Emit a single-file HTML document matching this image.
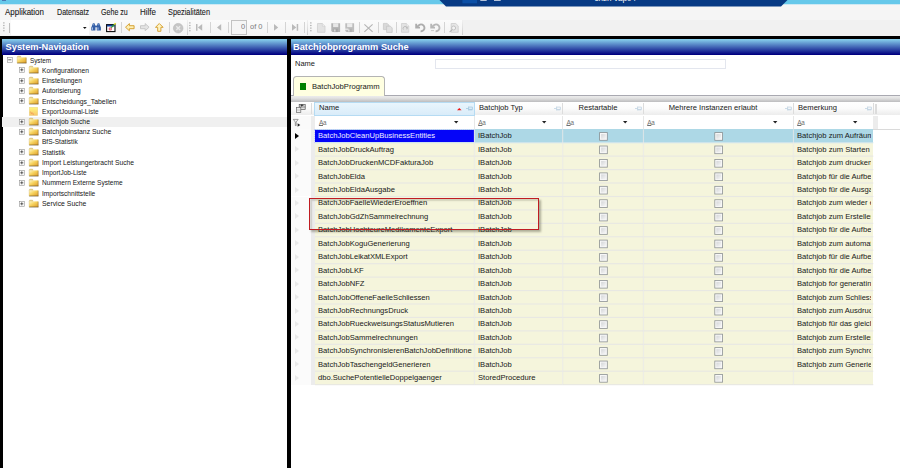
<!DOCTYPE html><html><head><meta charset="utf-8"><title>Batchjobprogramm Suche</title><style>
*{box-sizing:border-box;margin:0;padding:0}
html,body{width:900px;height:468px;overflow:hidden;background:#fff}
body{position:relative;font-family:"Liberation Sans",sans-serif;color:#1c1c1c}
.a{position:absolute}
.t{position:absolute;white-space:nowrap;line-height:1}
.menu{font-size:8.8px;top:8.3px;color:#1a1a1a;transform-origin:0 50%;-webkit-text-stroke:.1px currentColor}
.hd{font-weight:bold;color:#fff;font-size:9.25px;top:42.5px}
.g{font-size:8px;transform:scaleX(.95);transform-origin:0 50%;color:#181818}
.tr{font-size:7.8px;color:#161616;transform-origin:0 50%}
.cell{position:absolute;overflow:hidden;white-space:nowrap;font-size:8px;line-height:13.44px;height:13.44px;color:#181818}
.s{display:inline-block;transform:scaleX(.95);transform-origin:0 50%}
.cb{position:absolute;width:8.6px;height:8.6px;border:.9px solid #8e8f8f;background:linear-gradient(135deg,#dcdcdc,#fafafa 70%);box-shadow:inset 0 0 0 1.2px #f4f4f4}
.sep{position:absolute;width:1px;background:#d4d4d4;top:22px;height:11px}
svg{position:absolute;overflow:visible}
</style></head><body>
<div class="a" style="left:0;top:0;width:900px;height:19.8px;background:#f5f5f5"></div>
<div class="a" style="left:0;top:0;width:900px;height:4.5px;background:#66c8ea"></div>
<div class="a" style="left:0;top:4.2px;width:900px;height:1px;background:linear-gradient(#a8dcf0,#f5f5f5)"></div>
<svg style="left:0;top:0" width="900" height="8"><polygon points="439.5,0 787.5,0 781,6.4 446,6.4" fill="#073a84"/><rect x="462.4" y="0" width="14.6" height="3.3" fill="#0b4fa6"/><rect x="480.3" y="0" width="6.4" height=".7" fill="#fff"/><rect x="494" y="0" width="6.7" height=".7" fill="#fff"/></svg>
<div class="t" style="left:594.5px;top:-5.5px;font-size:8px;color:#fff">chzh-vap04</div>
<div class="a" style="left:1.8px;top:0;width:4.6px;height:.9px;background:#4468a8;opacity:.8"></div>
<div class="t menu" style="left:5.3px;transform:scaleX(0.904)">Applikation</div>
<div class="t menu" style="left:56.6px;transform:scaleX(0.81)">Datensatz</div>
<div class="t menu" style="left:101.1px;transform:scaleX(0.806)">Gehe zu</div>
<div class="t menu" style="left:140px;transform:scaleX(0.909)">Hilfe</div>
<div class="t menu" style="left:168.3px;transform:scaleX(0.834)">Spezialitäten</div>
<div class="a" style="left:0;top:19.8px;width:900px;height:16px;background:#f1f1f1"></div>
<div class="a" style="left:0;top:19.8px;width:462.7px;height:15.8px;background:linear-gradient(#fbfbfb,#f3f3f3)"></div>
<div class="a" style="left:10.5px;top:20px;width:78.5px;height:15.4px;background:#fff"></div>
<div class="a" style="left:9.2px;top:22.6px;width:.8px;height:10px;background:#bdbdbd"></div>
<svg style="left:3.4px;top:22.2px" width="2" height="10" viewBox="0 0 2 10"><g fill="#a9a9a9"><rect x=".2" y=".3" width="1.3" height="1.2"/><rect x=".2" y="2.9" width="1.3" height="1.2"/><rect x=".2" y="5.5" width="1.3" height="1.2"/><rect x=".2" y="8.1" width="1.3" height="1.2"/></g></svg>
<svg style="left:189.4px;top:22.2px" width="2" height="10" viewBox="0 0 2 10"><g fill="#a9a9a9"><rect x=".2" y=".3" width="1.3" height="1.2"/><rect x=".2" y="2.9" width="1.3" height="1.2"/><rect x=".2" y="5.5" width="1.3" height="1.2"/><rect x=".2" y="8.1" width="1.3" height="1.2"/></g></svg>
<svg style="left:309.6px;top:22.2px" width="2" height="10" viewBox="0 0 2 10"><g fill="#a9a9a9"><rect x=".2" y=".3" width="1.3" height="1.2"/><rect x=".2" y="2.9" width="1.3" height="1.2"/><rect x=".2" y="5.5" width="1.3" height="1.2"/><rect x=".2" y="8.1" width="1.3" height="1.2"/></g></svg>
<div class="a" style="left:186.8px;top:20px;width:.9px;height:15.4px;background:linear-gradient(#f1f1f1,#cfcfcf)"></div>
<div class="a" style="left:306.8px;top:20px;width:.9px;height:15.4px;background:linear-gradient(#f1f1f1,#cfcfcf)"></div>
<div class="a" style="left:462.2px;top:20px;width:.9px;height:15.4px;background:linear-gradient(#f1f1f1,#cfcfcf)"></div>
<svg style="left:82.9px;top:26.7px" width="3.6" height="2" viewBox="0 0 4.4 2.4"><path d="M0 0H4.4L2.2 2.4Z" fill="#111"/></svg>
<svg style="left:91.2px;top:23.2px" width="10.2" height="8" viewBox="0 0 10.2 8"><g fill="#355fa6"><path d="M1.9 .3H3.5L4.4 3V7.5H.3V4.4Z"/><path d="M6.7 .3H8.3L9.9 4.4V7.5H5.8V3Z"/><rect x="4" y="2.6" width="2.2" height="1.7"/></g><path d="M1.5 4.4V6.8M7 4.4V6.8" stroke="#b4cbee" stroke-width=".9"/><path d="M2.5 .9V2.4M7.7 .9V2.4" stroke="#8fadd9" stroke-width=".7"/></svg>
<svg style="left:105.8px;top:22.6px" width="10.6" height="9.2" viewBox="0 0 10.6 9.2"><rect x=".6" y="1.6" width="8.4" height="7" fill="#fff" stroke="#0b0b0b" stroke-width="1.1"/><rect x="1" y="1.8" width="7.6" height="1.7" fill="#143f9e"/><circle cx="4.3" cy="5.9" r="1.7" fill="#e35a6a"/><circle cx="4.3" cy="5.9" r=".7" fill="#f7c9cf"/><path d="M5.2 4.6L8.6 1.2" stroke="#2f9a2f" stroke-width="1.3"/><path d="M8.2 1.6L9.8 .2" stroke="#e6d520" stroke-width="1.3"/></svg>
<div class="sep" style="left:120.5px"></div>
<div class="sep" style="left:168.5px"></div>
<div class="sep" style="left:209.9px"></div>
<div class="sep" style="left:227.8px"></div>
<div class="sep" style="left:266.8px"></div>
<div class="sep" style="left:285.1px"></div>
<div class="sep" style="left:303.5px"></div>
<div class="sep" style="left:358.8px"></div>
<div class="sep" style="left:377.8px"></div>
<div class="sep" style="left:396.0px"></div>
<div class="sep" style="left:444.2px"></div>
<svg style="left:125.2px;top:23.4px" width="9.6" height="8.4" viewBox="0 0 9.6 8.4"><path d="M.5 4.2L4.4 .6V2.7H9.1V5.7H4.4V7.8Z" fill="#fdefb4" stroke="#d39a26" stroke-width=".9" stroke-linejoin="round"/></svg>
<svg style="left:139.8px;top:23.4px" width="9.6" height="8.4" viewBox="0 0 9.6 8.4"><path d="M9.1 4.2L5.2 .6V2.7H.5V5.7H5.2V7.8Z" fill="#e4e4e4" stroke="#c4c4c4" stroke-width=".9" stroke-linejoin="round"/></svg>
<svg style="left:154.9px;top:23.1px" width="8.6" height="8.8" viewBox="0 0 8.6 8.8"><path d="M4.3 .5L8.1 4.3H5.9V8.3H2.7V4.3H.5Z" fill="#fef4c4" stroke="#d39a26" stroke-width=".9" stroke-linejoin="round"/></svg>
<svg style="left:172.6px;top:22.6px" width="10.4" height="10.4" viewBox="0 0 10.4 10.4"><circle cx="5.2" cy="5.2" r="4.8" fill="#c6c6c6" stroke="#b8b8b8" stroke-width=".6"/><path d="M3.3 3.3L7.1 7.1M7.1 3.3L3.3 7.1" stroke="#e9e9e9" stroke-width="1.4"/></svg>
<svg style="left:196px;top:24px" width="6.2" height="6.8" viewBox="0 0 6.2 6.8"><rect x="0" y="0" width="1.5" height="6.8" fill="#bababa"/><path d="M6.2 0V6.8L1.9 3.4Z" fill="#bababa"/></svg>
<svg style="left:216.6px;top:24px" width="4.2" height="6.8" viewBox="0 0 4.2 6.8"><path d="M4.2 0V6.8L0 3.4Z" fill="#bababa"/></svg>
<svg style="left:274px;top:24px" width="4.2" height="6.8" viewBox="0 0 4.2 6.8"><path d="M0 0V6.8L4.2 3.4Z" fill="#bababa"/></svg>
<svg style="left:292px;top:24px" width="6.2" height="6.8" viewBox="0 0 6.2 6.8"><rect x="4.7" y="0" width="1.5" height="6.8" fill="#bababa"/><path d="M0 0V6.8L4.3 3.4Z" fill="#bababa"/></svg>
<div class="a" style="left:231.2px;top:20px;width:15.6px;height:14.8px;background:#f5f5f5;border:1px solid #c2c2c2"></div>
<div class="t" style="left:240.9px;top:23.3px;font-size:8.1px;color:#7a7a7a;transform:scaleX(.92);transform-origin:0 50%">0</div>
<div class="t" style="left:249.8px;top:23.3px;font-size:8.1px;color:#7a7a7a;transform:scaleX(.92);transform-origin:0 50%">of 0</div>
<svg style="left:316.6px;top:22.6px" width="8.6" height="9.8" viewBox="0 0 8.6 9.8"><path d="M.5 .5H5.4L8 3.1V9.3H.5Z" fill="#e3e3e3" stroke="#cfcfcf" stroke-width=".8"/><path d="M5.4 .5V3.1H8" fill="#f3f3f3" stroke="#cfcfcf" stroke-width=".6"/></svg>
<svg style="left:330.6px;top:22.8px" width="9.4" height="9.4" viewBox="0 0 9.4 9.4"><path d="M.3 .3H9.1V9.1H1.4L.3 8Z" fill="#b4b4b4"/><rect x="2.1" y=".3" width="5.2" height="3.8" fill="#e8e8e8"/><rect x="2.6" y="5.8" width="4.2" height="3.3" fill="#a6a6a6"/><rect x="3.2" y="6.4" width="1.3" height="2.2" fill="#e4e4e4"/></svg>
<svg style="left:345.2px;top:22.8px" width="9.4" height="9.4" viewBox="0 0 9.4 9.4"><path d="M.3 .3H9.1V9.1H1.4L.3 8Z" fill="#bebebe"/><rect x="2.1" y=".3" width="5.2" height="3.8" fill="#ececec"/><rect x="2.6" y="5.8" width="4.2" height="3.3" fill="#b2b2b2"/><rect x="3.2" y="6.4" width="1.3" height="2.2" fill="#e8e8e8"/><path d="M0 6.2H3.4" stroke="#eee" stroke-width="1.2"/></svg>
<svg style="left:364px;top:23.6px" width="9" height="8.2" viewBox="0 0 9 8.2"><path d="M.4 .4L8.6 7.8M8.6 .4L.4 7.8" stroke="#b3b3b3" stroke-width="1.1"/></svg>
<svg style="left:382.6px;top:22.6px" width="9.6" height="9.8" viewBox="0 0 9.6 9.8"><path d="M.4 .4H4.2L6 2.2V6.6H.4Z" fill="#d9d9d9" stroke="#c6c6c6" stroke-width=".7"/><path d="M3.6 3.2H7.4L9.2 5V9.4H3.6Z" fill="#e1e1e1" stroke="#c3c3c3" stroke-width=".7"/></svg>
<svg style="left:401.2px;top:22.6px" width="8.4" height="9.8" viewBox="0 0 8.4 9.8"><path d="M.5 .5H5.4L7.8 3.1V9.3H.5Z" fill="#e3e3e3" stroke="#cfcfcf" stroke-width=".8"/><path d="M5.4 .5V3.1H8" fill="#f3f3f3" stroke="#cfcfcf" stroke-width=".6"/><path d="M2.4 6.6A2 2 0 1 1 5.8 6.4" stroke="#b9b9b9" stroke-width=".9" fill="none"/><path d="M5 4.2H6.4V5.6" stroke="#b9b9b9" stroke-width=".8" fill="none"/></svg>
<svg style="left:414.8px;top:23.1px" width="11" height="9" viewBox="0 0 11 9"><path d="M1.2 .8V4.6H5" stroke="#adadad" stroke-width="1.9" fill="none"/><path d="M1.6 4.2L4.2 2A3.4 3.4 0 1 1 5.6 8.2" stroke="#adadad" stroke-width="1.9" fill="none"/></svg>
<svg style="left:429.8px;top:23.1px" width="11" height="9" viewBox="0 0 11 9"><path d="M1.2 .8V4.6H5" stroke="#b8b8b8" stroke-width="1.9" fill="none"/><path d="M1.6 4.2L4.2 2A3.4 3.4 0 1 1 5.6 8.2" stroke="#b8b8b8" stroke-width="1.9" fill="none"/><path d="M1 7.6H4" stroke="#c9c9c9" stroke-width="1"/></svg>
<svg style="left:448.6px;top:22.6px" width="9.6" height="9.8" viewBox="0 0 9.6 9.8"><path d="M2.2 .5H6.8L9.2 2.9V9.3H2.2Z" fill="#e6e6e6" stroke="#cdcdcd" stroke-width=".8"/><circle cx="4.6" cy="5" r="2" fill="#f3f3f3" stroke="#b9b9b9" stroke-width=".8"/><path d="M3.2 6.6L.6 9.2" stroke="#b4b4b4" stroke-width="1.1"/></svg>
<div class="a" style="left:0;top:35.6px;width:900px;height:3.2px;background:#000"></div>
<div class="a" style="left:0;top:35.6px;width:2.6px;height:433px;background:#000"></div>
<div class="a" style="left:287.3px;top:35.6px;width:3.6px;height:433px;background:#000"></div>
<div class="a" style="left:2.4px;top:38.8px;width:284.9px;height:15.9px;background:linear-gradient(#87ceeb 0%,#84caea 4%,#000080 97%,#000080 100%)"></div>
<div class="a" style="left:290.7px;top:38.8px;width:609.3px;height:15.9px;background:linear-gradient(#87ceeb 0%,#84caea 4%,#000080 97%,#000080 100%)"></div>
<div class="t hd" style="left:5.6px">System-Navigation</div>
<div class="t hd" style="left:293px">Batchjobprogramm Suche</div>
<svg width="0" height="0" style="left:0;top:0"><defs><linearGradient id="fg" x1="0" y1="0" x2="1" y2="1"><stop offset="0" stop-color="#fff8c6"/><stop offset=".45" stop-color="#f6d25e"/><stop offset="1" stop-color="#dd9a28"/></linearGradient><linearGradient id="ng" x1="0" y1="0" x2="0" y2="1"><stop offset="0" stop-color="#fff77e"/><stop offset="1" stop-color="#f8c468"/></linearGradient></defs></svg>
<svg style="left:7.3px;top:57.0px" width="5.6" height="5.6" viewBox="0 0 9 9"><rect x=".5" y=".5" width="8" height="8" fill="#fff" stroke="#969696"/><path d="M2 4.5H7" stroke="#222" stroke-width="1.1" fill="none"/></svg>
<svg style="left:16.6px;top:56.25px" width="9.6" height="7.6" viewBox="0 0 9.6 7.6"><path d="M.2 1.6L.2 .9L.8 .2H3.5L4.2 1.4Z" fill="#ecd27c" stroke="#b99b4a" stroke-width=".4"/><rect x=".15" y="1.35" width="9.1" height="5.7" fill="url(#fg)"/><path d="M.1 7.05H9.4" stroke="#5e4a22" stroke-width=".7" opacity=".85"/><path d="M9.2 1.6V7.2" stroke="#8c6c2a" stroke-width=".6" opacity=".8"/><path d="M.2 1.5V7" stroke="#d9b65a" stroke-width=".4"/></svg>
<div class="t tr" style="left:30.0px;top:56.55px;transform:scaleX(0.808)">System</div>
<svg style="left:19.1px;top:67.49px" width="5.6" height="5.6" viewBox="0 0 9 9"><rect x=".5" y=".5" width="8" height="8" fill="#fff" stroke="#969696"/><path d="M2 4.5H7M4.5 2V7" stroke="#222" stroke-width="1.1" fill="none"/></svg>
<svg style="left:29.0px;top:66.49px" width="9.6" height="7.6" viewBox="0 0 9.6 7.6"><path d="M.2 1.6L.2 .9L.8 .2H3.5L4.2 1.4Z" fill="#ecd27c" stroke="#b99b4a" stroke-width=".4"/><rect x=".15" y="1.35" width="9.1" height="5.7" fill="url(#fg)"/><path d="M.1 7.05H9.4" stroke="#5e4a22" stroke-width=".7" opacity=".85"/><path d="M9.2 1.6V7.2" stroke="#8c6c2a" stroke-width=".6" opacity=".8"/><path d="M.2 1.5V7" stroke="#d9b65a" stroke-width=".4"/></svg>
<div class="t tr" style="left:42.3px;top:66.79px;transform:scaleX(0.86)">Konfigurationen</div>
<svg style="left:19.1px;top:77.73px" width="5.6" height="5.6" viewBox="0 0 9 9"><rect x=".5" y=".5" width="8" height="8" fill="#fff" stroke="#969696"/><path d="M2 4.5H7M4.5 2V7" stroke="#222" stroke-width="1.1" fill="none"/></svg>
<svg style="left:29.0px;top:76.73px" width="9.6" height="7.6" viewBox="0 0 9.6 7.6"><path d="M.2 1.6L.2 .9L.8 .2H3.5L4.2 1.4Z" fill="#ecd27c" stroke="#b99b4a" stroke-width=".4"/><rect x=".15" y="1.35" width="9.1" height="5.7" fill="url(#fg)"/><path d="M.1 7.05H9.4" stroke="#5e4a22" stroke-width=".7" opacity=".85"/><path d="M9.2 1.6V7.2" stroke="#8c6c2a" stroke-width=".6" opacity=".8"/><path d="M.2 1.5V7" stroke="#d9b65a" stroke-width=".4"/></svg>
<div class="t tr" style="left:42.3px;top:77.03px;transform:scaleX(0.854)">Einstellungen</div>
<svg style="left:19.1px;top:87.97px" width="5.6" height="5.6" viewBox="0 0 9 9"><rect x=".5" y=".5" width="8" height="8" fill="#fff" stroke="#969696"/><path d="M2 4.5H7M4.5 2V7" stroke="#222" stroke-width="1.1" fill="none"/></svg>
<svg style="left:29.0px;top:86.97px" width="9.6" height="7.6" viewBox="0 0 9.6 7.6"><path d="M.2 1.6L.2 .9L.8 .2H3.5L4.2 1.4Z" fill="#ecd27c" stroke="#b99b4a" stroke-width=".4"/><rect x=".15" y="1.35" width="9.1" height="5.7" fill="url(#fg)"/><path d="M.1 7.05H9.4" stroke="#5e4a22" stroke-width=".7" opacity=".85"/><path d="M9.2 1.6V7.2" stroke="#8c6c2a" stroke-width=".6" opacity=".8"/><path d="M.2 1.5V7" stroke="#d9b65a" stroke-width=".4"/></svg>
<div class="t tr" style="left:42.3px;top:87.27px;transform:scaleX(0.842)">Autorisierung</div>
<svg style="left:19.1px;top:98.21px" width="5.6" height="5.6" viewBox="0 0 9 9"><rect x=".5" y=".5" width="8" height="8" fill="#fff" stroke="#969696"/><path d="M2 4.5H7M4.5 2V7" stroke="#222" stroke-width="1.1" fill="none"/></svg>
<svg style="left:29.0px;top:97.21px" width="9.6" height="7.6" viewBox="0 0 9.6 7.6"><path d="M.2 1.6L.2 .9L.8 .2H3.5L4.2 1.4Z" fill="#ecd27c" stroke="#b99b4a" stroke-width=".4"/><rect x=".15" y="1.35" width="9.1" height="5.7" fill="url(#fg)"/><path d="M.1 7.05H9.4" stroke="#5e4a22" stroke-width=".7" opacity=".85"/><path d="M9.2 1.6V7.2" stroke="#8c6c2a" stroke-width=".6" opacity=".8"/><path d="M.2 1.5V7" stroke="#d9b65a" stroke-width=".4"/></svg>
<div class="t tr" style="left:42.3px;top:97.51px;transform:scaleX(0.879)">Entscheidungs_Tabellen</div>
<svg style="left:29.3px;top:107.2px" width="9" height="8.8" viewBox="0 0 9 8.8"><rect x=".2" y=".2" width="8.6" height="8.4" fill="url(#ng)" stroke="#e3cf8a" stroke-width=".4"/><path d="M.8 5.2C2 4.6 2.6 5.6 2.2 6.6C3.4 5.2 4.8 6.4 4.2 8" stroke="#ee8a50" stroke-width=".8" fill="none" opacity=".8"/></svg>
<div class="t tr" style="left:42.3px;top:107.75px;transform:scaleX(0.844)">ExportJournal-Liste</div>
<div class="a" style="left:2.4px;top:116.62px;width:284.9px;height:10.24px;background:#f0f0f0"></div>
<svg style="left:19.1px;top:118.69px" width="5.6" height="5.6" viewBox="0 0 9 9"><rect x=".5" y=".5" width="8" height="8" fill="#fff" stroke="#969696"/><path d="M2 4.5H7M4.5 2V7" stroke="#222" stroke-width="1.1" fill="none"/></svg>
<svg style="left:29.0px;top:117.69px" width="9.6" height="7.6" viewBox="0 0 9.6 7.6"><path d="M.2 1.6L.2 .9L.8 .2H3.5L4.2 1.4Z" fill="#ecd27c" stroke="#b99b4a" stroke-width=".4"/><rect x=".15" y="1.35" width="9.1" height="5.7" fill="url(#fg)"/><path d="M.1 7.05H9.4" stroke="#5e4a22" stroke-width=".7" opacity=".85"/><path d="M9.2 1.6V7.2" stroke="#8c6c2a" stroke-width=".6" opacity=".8"/><path d="M.2 1.5V7" stroke="#d9b65a" stroke-width=".4"/></svg>
<div class="t tr" style="left:42.3px;top:117.99px;transform:scaleX(0.878)">Batchjob Suche</div>
<svg style="left:19.1px;top:128.93px" width="5.6" height="5.6" viewBox="0 0 9 9"><rect x=".5" y=".5" width="8" height="8" fill="#fff" stroke="#969696"/><path d="M2 4.5H7M4.5 2V7" stroke="#222" stroke-width="1.1" fill="none"/></svg>
<svg style="left:29.0px;top:127.93px" width="9.6" height="7.6" viewBox="0 0 9.6 7.6"><path d="M.2 1.6L.2 .9L.8 .2H3.5L4.2 1.4Z" fill="#ecd27c" stroke="#b99b4a" stroke-width=".4"/><rect x=".15" y="1.35" width="9.1" height="5.7" fill="url(#fg)"/><path d="M.1 7.05H9.4" stroke="#5e4a22" stroke-width=".7" opacity=".85"/><path d="M9.2 1.6V7.2" stroke="#8c6c2a" stroke-width=".6" opacity=".8"/><path d="M.2 1.5V7" stroke="#d9b65a" stroke-width=".4"/></svg>
<div class="t tr" style="left:42.3px;top:128.23px;transform:scaleX(0.873)">Batchjobinstanz Suche</div>
<svg style="left:29.0px;top:138.17px" width="9.6" height="7.6" viewBox="0 0 9.6 7.6"><path d="M.2 1.6L.2 .9L.8 .2H3.5L4.2 1.4Z" fill="#ecd27c" stroke="#b99b4a" stroke-width=".4"/><rect x=".15" y="1.35" width="9.1" height="5.7" fill="url(#fg)"/><path d="M.1 7.05H9.4" stroke="#5e4a22" stroke-width=".7" opacity=".85"/><path d="M9.2 1.6V7.2" stroke="#8c6c2a" stroke-width=".6" opacity=".8"/><path d="M.2 1.5V7" stroke="#d9b65a" stroke-width=".4"/></svg>
<div class="t tr" style="left:42.3px;top:138.47px;transform:scaleX(0.84)">BfS-Statistik</div>
<svg style="left:19.1px;top:149.41px" width="5.6" height="5.6" viewBox="0 0 9 9"><rect x=".5" y=".5" width="8" height="8" fill="#fff" stroke="#969696"/><path d="M2 4.5H7M4.5 2V7" stroke="#222" stroke-width="1.1" fill="none"/></svg>
<svg style="left:29.0px;top:148.41px" width="9.6" height="7.6" viewBox="0 0 9.6 7.6"><path d="M.2 1.6L.2 .9L.8 .2H3.5L4.2 1.4Z" fill="#ecd27c" stroke="#b99b4a" stroke-width=".4"/><rect x=".15" y="1.35" width="9.1" height="5.7" fill="url(#fg)"/><path d="M.1 7.05H9.4" stroke="#5e4a22" stroke-width=".7" opacity=".85"/><path d="M9.2 1.6V7.2" stroke="#8c6c2a" stroke-width=".6" opacity=".8"/><path d="M.2 1.5V7" stroke="#d9b65a" stroke-width=".4"/></svg>
<div class="t tr" style="left:42.3px;top:148.71px;transform:scaleX(0.842)">Statistik</div>
<svg style="left:19.1px;top:159.65px" width="5.6" height="5.6" viewBox="0 0 9 9"><rect x=".5" y=".5" width="8" height="8" fill="#fff" stroke="#969696"/><path d="M2 4.5H7M4.5 2V7" stroke="#222" stroke-width="1.1" fill="none"/></svg>
<svg style="left:29.0px;top:158.65px" width="9.6" height="7.6" viewBox="0 0 9.6 7.6"><path d="M.2 1.6L.2 .9L.8 .2H3.5L4.2 1.4Z" fill="#ecd27c" stroke="#b99b4a" stroke-width=".4"/><rect x=".15" y="1.35" width="9.1" height="5.7" fill="url(#fg)"/><path d="M.1 7.05H9.4" stroke="#5e4a22" stroke-width=".7" opacity=".85"/><path d="M9.2 1.6V7.2" stroke="#8c6c2a" stroke-width=".6" opacity=".8"/><path d="M.2 1.5V7" stroke="#d9b65a" stroke-width=".4"/></svg>
<div class="t tr" style="left:42.3px;top:158.95px;transform:scaleX(0.863)">Import Leistungerbracht Suche</div>
<svg style="left:19.1px;top:169.89px" width="5.6" height="5.6" viewBox="0 0 9 9"><rect x=".5" y=".5" width="8" height="8" fill="#fff" stroke="#969696"/><path d="M2 4.5H7M4.5 2V7" stroke="#222" stroke-width="1.1" fill="none"/></svg>
<svg style="left:29.0px;top:168.89px" width="9.6" height="7.6" viewBox="0 0 9.6 7.6"><path d="M.2 1.6L.2 .9L.8 .2H3.5L4.2 1.4Z" fill="#ecd27c" stroke="#b99b4a" stroke-width=".4"/><rect x=".15" y="1.35" width="9.1" height="5.7" fill="url(#fg)"/><path d="M.1 7.05H9.4" stroke="#5e4a22" stroke-width=".7" opacity=".85"/><path d="M9.2 1.6V7.2" stroke="#8c6c2a" stroke-width=".6" opacity=".8"/><path d="M.2 1.5V7" stroke="#d9b65a" stroke-width=".4"/></svg>
<div class="t tr" style="left:42.3px;top:169.19px;transform:scaleX(0.832)">ImportJob-Liste</div>
<svg style="left:19.1px;top:180.13px" width="5.6" height="5.6" viewBox="0 0 9 9"><rect x=".5" y=".5" width="8" height="8" fill="#fff" stroke="#969696"/><path d="M2 4.5H7M4.5 2V7" stroke="#222" stroke-width="1.1" fill="none"/></svg>
<svg style="left:29.0px;top:179.13px" width="9.6" height="7.6" viewBox="0 0 9.6 7.6"><path d="M.2 1.6L.2 .9L.8 .2H3.5L4.2 1.4Z" fill="#ecd27c" stroke="#b99b4a" stroke-width=".4"/><rect x=".15" y="1.35" width="9.1" height="5.7" fill="url(#fg)"/><path d="M.1 7.05H9.4" stroke="#5e4a22" stroke-width=".7" opacity=".85"/><path d="M9.2 1.6V7.2" stroke="#8c6c2a" stroke-width=".6" opacity=".8"/><path d="M.2 1.5V7" stroke="#d9b65a" stroke-width=".4"/></svg>
<div class="t tr" style="left:42.3px;top:179.43px;transform:scaleX(0.842)">Nummern Externe Systeme</div>
<svg style="left:29.0px;top:189.37px" width="9.6" height="7.6" viewBox="0 0 9.6 7.6"><path d="M.2 1.6L.2 .9L.8 .2H3.5L4.2 1.4Z" fill="#ecd27c" stroke="#b99b4a" stroke-width=".4"/><rect x=".15" y="1.35" width="9.1" height="5.7" fill="url(#fg)"/><path d="M.1 7.05H9.4" stroke="#5e4a22" stroke-width=".7" opacity=".85"/><path d="M9.2 1.6V7.2" stroke="#8c6c2a" stroke-width=".6" opacity=".8"/><path d="M.2 1.5V7" stroke="#d9b65a" stroke-width=".4"/></svg>
<div class="t tr" style="left:42.3px;top:189.67px;transform:scaleX(0.848)">Importschnittstelle</div>
<svg style="left:19.1px;top:200.61px" width="5.6" height="5.6" viewBox="0 0 9 9"><rect x=".5" y=".5" width="8" height="8" fill="#fff" stroke="#969696"/><path d="M2 4.5H7M4.5 2V7" stroke="#222" stroke-width="1.1" fill="none"/></svg>
<svg style="left:29.0px;top:199.61px" width="9.6" height="7.6" viewBox="0 0 9.6 7.6"><path d="M.2 1.6L.2 .9L.8 .2H3.5L4.2 1.4Z" fill="#ecd27c" stroke="#b99b4a" stroke-width=".4"/><rect x=".15" y="1.35" width="9.1" height="5.7" fill="url(#fg)"/><path d="M.1 7.05H9.4" stroke="#5e4a22" stroke-width=".7" opacity=".85"/><path d="M9.2 1.6V7.2" stroke="#8c6c2a" stroke-width=".6" opacity=".8"/><path d="M.2 1.5V7" stroke="#d9b65a" stroke-width=".4"/></svg>
<div class="t tr" style="left:42.3px;top:199.91px;transform:scaleX(0.881)">Service Suche</div>
<div class="t g" style="left:294.6px;top:59.8px;font-size:7.9px">Name</div>
<div class="a" style="left:435px;top:58.8px;width:290.6px;height:10px;border:1px solid #e3e6ee;background:#fff"></div>
<div class="a" style="left:290.7px;top:95.2px;width:609.3px;height:6.4px;background:linear-gradient(#a9a9b1 0,#a9a9b1 12%,#ececec 14%,#e2e2e2 45%,#bcbcbe 100%)"></div>
<div class="a" style="left:293.3px;top:75.8px;width:91.4px;height:20.6px;background:#ffffe1;border:1px solid #b4b4b4;border-bottom:none;border-radius:3.5px 3.5px 0 0"></div>
<div class="a" style="left:300px;top:83.2px;width:6.2px;height:6.4px;background:#008000"></div>
<div class="t g" style="left:311.6px;top:82.7px;font-size:8.05px">BatchJobProgramm</div>
<div class="a" style="left:290.7px;top:101.6px;width:609.3px;height:13.900000000000006px;background:linear-gradient(#ffffff,#fbfbfb 50%,#ececec)"></div>
<div class="a" style="left:314.4px;top:101.6px;width:160.40000000000003px;height:14.200000000000006px;background:linear-gradient(#e9f5fd,#d9ecf9);border:1px solid #b5dbf3"></div>
<div class="a" style="left:310.5px;top:102.6px;width:1px;height:11.900000000000006px;background:#dcdcdc"></div>
<div class="a" style="left:562.0px;top:102.6px;width:1px;height:11.900000000000006px;background:#dcdcdc"></div>
<div class="a" style="left:642.8px;top:102.6px;width:1px;height:11.900000000000006px;background:#dcdcdc"></div>
<div class="a" style="left:792.8px;top:102.6px;width:1px;height:11.900000000000006px;background:#dcdcdc"></div>
<div class="a" style="left:872.8px;top:102.6px;width:1px;height:11.900000000000006px;background:#dcdcdc"></div>
<div class="a" style="left:875px;top:103.6px;width:1.8px;height:10px;background:#dcdcdc"></div>
<div class="t g" style="left:318.6px;top:103.9px">Name</div>
<div class="t g" style="left:479.4px;top:103.9px">Batchjob Typ</div>
<div class="t g" style="left:597.9px;top:103.9px;transform:translateX(-50%) scaleX(.95);transform-origin:50% 50%">Restartable</div>
<div class="t g" style="left:713.3px;top:103.9px;transform:translateX(-50%) scaleX(.95);transform-origin:50% 50%">Mehrere Instanzen erlaubt</div>
<div class="t g" style="left:797.8px;top:103.9px">Bemerkung</div>
<svg style="left:466.1px;top:106.2px" width="7" height="5" viewBox="0 0 7 5"><path d="M0 2.5H2.6M2.6 .6V4.4M2.6 1.1H6.4V3.4H2.6M2.6 3.9H6.4" stroke="#9cc3dc" stroke-width=".7" fill="none"/></svg>
<svg style="left:554.3px;top:106.2px" width="7" height="5" viewBox="0 0 7 5"><path d="M0 2.5H2.6M2.6 .6V4.4M2.6 1.1H6.4V3.4H2.6M2.6 3.9H6.4" stroke="#b7cfe0" stroke-width=".7" fill="none"/></svg>
<svg style="left:635.1px;top:106.2px" width="7" height="5" viewBox="0 0 7 5"><path d="M0 2.5H2.6M2.6 .6V4.4M2.6 1.1H6.4V3.4H2.6M2.6 3.9H6.4" stroke="#b7cfe0" stroke-width=".7" fill="none"/></svg>
<svg style="left:785.1px;top:106.2px" width="7" height="5" viewBox="0 0 7 5"><path d="M0 2.5H2.6M2.6 .6V4.4M2.6 1.1H6.4V3.4H2.6M2.6 3.9H6.4" stroke="#b7cfe0" stroke-width=".7" fill="none"/></svg>
<svg style="left:865.1px;top:106.2px" width="7" height="5" viewBox="0 0 7 5"><path d="M0 2.5H2.6M2.6 .6V4.4M2.6 1.1H6.4V3.4H2.6M2.6 3.9H6.4" stroke="#b7cfe0" stroke-width=".7" fill="none"/></svg>
<svg style="left:456.8px;top:107.9px" width="4.6" height="2.2" viewBox="0 0 4.6 2.2"><path d="M0 2.2L2.3 0L4.6 2.2Z" fill="#f01616"/></svg>
<svg style="left:296px;top:104px" width="10" height="9" viewBox="0 0 10 9"><rect x="3.2" y=".5" width="6" height="5" fill="#fff" stroke="#555" stroke-width=".7"/><path d="M3.2 2.2H9.2M3.2 3.8H9.2M5.6 .5V3" stroke="#555" stroke-width=".6"/><rect x=".6" y="3.4" width="4.2" height="5" fill="#fff" stroke="#666" stroke-width=".7"/><path d="M.6 5.2H4.8M.6 6.8H4.8" stroke="#888" stroke-width=".5"/><path d="M4.6 1.2H7.4" stroke="#000" stroke-width=".9"/></svg>
<div class="a" style="left:290.7px;top:115.5px;width:609.3px;height:14.100000000000012px;background:#fff;border-bottom:1px solid #dadada"></div>
<div class="a" style="left:290.7px;top:115.5px;width:20px;height:14.100000000000012px;background:#fafafa;border-bottom:1px solid #dadada"></div>
<div class="a" style="left:310.6px;top:115.5px;width:4.2px;height:13.800000000000011px;background:#ececec"></div>
<div class="a" style="left:873.3px;top:115.5px;width:4.3px;height:13.800000000000011px;background:#ececec"></div>
<div class="a" style="left:473.8px;top:115.5px;width:1px;height:13.800000000000011px;background:#e7e7e7"></div>
<div class="a" style="left:562.0px;top:115.5px;width:1px;height:13.800000000000011px;background:#e7e7e7"></div>
<div class="a" style="left:642.8px;top:115.5px;width:1px;height:13.800000000000011px;background:#e7e7e7"></div>
<div class="a" style="left:792.8px;top:115.5px;width:1px;height:13.800000000000011px;background:#e7e7e7"></div>
<div class="t" style="left:318.9px;top:119.6px;font-size:6.6px;color:#707070;letter-spacing:-.3px"><span style="text-decoration:underline;text-underline-offset:.2px;text-decoration-thickness:.6px">A</span><span style="font-size:6.3px">a</span></div>
<svg style="left:454.3px;top:121.2px" width="4.4" height="2.4" viewBox="0 0 4.4 2.4"><path d="M0 0H4.4L2.2 2.4Z" fill="#222"/></svg>
<div class="t" style="left:478.2px;top:119.6px;font-size:6.6px;color:#707070;letter-spacing:-.3px"><span style="text-decoration:underline;text-underline-offset:.2px;text-decoration-thickness:.6px">A</span><span style="font-size:6.3px">a</span></div>
<svg style="left:542.4px;top:121.2px" width="4.4" height="2.4" viewBox="0 0 4.4 2.4"><path d="M0 0H4.4L2.2 2.4Z" fill="#222"/></svg>
<div class="t" style="left:566.4px;top:119.6px;font-size:6.6px;color:#707070;letter-spacing:-.3px"><span style="text-decoration:underline;text-underline-offset:.2px;text-decoration-thickness:.6px">A</span><span style="font-size:6.3px">a</span></div>
<svg style="left:623.2px;top:121.2px" width="4.4" height="2.4" viewBox="0 0 4.4 2.4"><path d="M0 0H4.4L2.2 2.4Z" fill="#222"/></svg>
<div class="t" style="left:647.2px;top:119.6px;font-size:6.6px;color:#707070;letter-spacing:-.3px"><span style="text-decoration:underline;text-underline-offset:.2px;text-decoration-thickness:.6px">A</span><span style="font-size:6.3px">a</span></div>
<svg style="left:773.2px;top:121.2px" width="4.4" height="2.4" viewBox="0 0 4.4 2.4"><path d="M0 0H4.4L2.2 2.4Z" fill="#222"/></svg>
<div class="t" style="left:797.2px;top:119.6px;font-size:6.6px;color:#707070;letter-spacing:-.3px"><span style="text-decoration:underline;text-underline-offset:.2px;text-decoration-thickness:.6px">A</span><span style="font-size:6.3px">a</span></div>
<svg style="left:853.2px;top:121.2px" width="4.4" height="2.4" viewBox="0 0 4.4 2.4"><path d="M0 0H4.4L2.2 2.4Z" fill="#222"/></svg>
<svg style="left:293px;top:118.8px" width="8" height="8" viewBox="0 0 8 8"><path d="M.3 .4H5.2L3.2 3V6.6L2.3 6.6V3Z" fill="#f4f4f4" stroke="#6c6c6c" stroke-width=".65"/><path d="M4.6 4.2L7.3 6L4.6 7.8Z" fill="#222"/></svg>
<div class="a" style="left:314.8px;top:129.3px;width:558.5px;height:13.54px;background:#add8e6"></div>
<div class="a" style="left:290.7px;top:129.3px;width:20.3px;height:13.44px;background:#fbfbfb"></div>
<div class="a" style="left:310.8px;top:129.3px;width:4.1px;height:13.54px;background:#ececec"></div>
<div class="a" style="left:314.8px;top:129.6px;width:159.0px;height:12.54px;background:#0505f8;outline:.7px dotted #c8c8ff;outline-offset:-.8px"></div>
<svg style="left:295.2px;top:132.82px" width="4" height="6" viewBox="0 0 4 6"><path d="M0 0L4 3L0 6Z" fill="#000"/></svg>
<div class="cell" style="left:318.4px;top:129.25px;width:153.70000000000005px;color:#eeeeff"><span class="s">BatchJobCleanUpBusinessEntities</span></div>
<div class="cell" style="left:478px;top:129.25px;width:82.5px"><span class="s">IBatchJob</span></div>
<div class="cell" style="left:796.7px;top:129.25px;width:74.59999999999991px"><span class="s">Batchjob zum Aufräumen</span></div>
<div class="a" style="left:314.8px;top:142.74px;width:558.5px;height:13.54px;background:#f5f5dc"></div>
<div class="a" style="left:290.7px;top:142.74px;width:20.3px;height:13.44px;background:#fbfbfb"></div>
<div class="a" style="left:310.8px;top:142.74px;width:4.1px;height:13.54px;background:#ececec"></div>
<svg style="left:295.2px;top:146.26px" width="4" height="6" viewBox="0 0 4 6"><path d="M0 0L4 3L0 6Z" fill="#e9e9e9"/></svg>
<div class="cell" style="left:318.4px;top:142.69px;width:153.70000000000005px;"><span class="s">BatchJobDruckAuftrag</span></div>
<div class="cell" style="left:478px;top:142.69px;width:82.5px"><span class="s">IBatchJob</span></div>
<div class="cell" style="left:796.7px;top:142.69px;width:74.59999999999991px"><span class="s">Batchjob zum Starten</span></div>
<div class="a" style="left:314.8px;top:156.18px;width:558.5px;height:13.54px;background:#f5f5dc"></div>
<div class="a" style="left:290.7px;top:156.18px;width:20.3px;height:13.44px;background:#fbfbfb"></div>
<div class="a" style="left:310.8px;top:156.18px;width:4.1px;height:13.54px;background:#ececec"></div>
<svg style="left:295.2px;top:159.7px" width="4" height="6" viewBox="0 0 4 6"><path d="M0 0L4 3L0 6Z" fill="#e9e9e9"/></svg>
<div class="cell" style="left:318.4px;top:156.13px;width:153.70000000000005px;"><span class="s">BatchJobDruckenMCDFakturaJob</span></div>
<div class="cell" style="left:478px;top:156.13px;width:82.5px"><span class="s">IBatchJob</span></div>
<div class="cell" style="left:796.7px;top:156.13px;width:74.59999999999991px"><span class="s">Batchjob zum drucken</span></div>
<div class="a" style="left:314.8px;top:169.62px;width:558.5px;height:13.54px;background:#f5f5dc"></div>
<div class="a" style="left:290.7px;top:169.62px;width:20.3px;height:13.44px;background:#fbfbfb"></div>
<div class="a" style="left:310.8px;top:169.62px;width:4.1px;height:13.54px;background:#ececec"></div>
<svg style="left:295.2px;top:173.14px" width="4" height="6" viewBox="0 0 4 6"><path d="M0 0L4 3L0 6Z" fill="#e9e9e9"/></svg>
<div class="cell" style="left:318.4px;top:169.57px;width:153.70000000000005px;"><span class="s">BatchJobElda</span></div>
<div class="cell" style="left:478px;top:169.57px;width:82.5px"><span class="s">IBatchJob</span></div>
<div class="cell" style="left:796.7px;top:169.57px;width:74.59999999999991px"><span class="s">Batchjob für die Aufbereitung</span></div>
<div class="a" style="left:314.8px;top:183.06px;width:558.5px;height:13.54px;background:#f5f5dc"></div>
<div class="a" style="left:290.7px;top:183.06px;width:20.3px;height:13.44px;background:#fbfbfb"></div>
<div class="a" style="left:310.8px;top:183.06px;width:4.1px;height:13.54px;background:#ececec"></div>
<svg style="left:295.2px;top:186.58px" width="4" height="6" viewBox="0 0 4 6"><path d="M0 0L4 3L0 6Z" fill="#e9e9e9"/></svg>
<div class="cell" style="left:318.4px;top:183.01px;width:153.70000000000005px;"><span class="s">BatchJobEldaAusgabe</span></div>
<div class="cell" style="left:478px;top:183.01px;width:82.5px"><span class="s">IBatchJob</span></div>
<div class="cell" style="left:796.7px;top:183.01px;width:74.59999999999991px"><span class="s">Batchjob für die Ausgabe</span></div>
<div class="a" style="left:314.8px;top:196.5px;width:558.5px;height:13.54px;background:#f5f5dc"></div>
<div class="a" style="left:290.7px;top:196.5px;width:20.3px;height:13.44px;background:#fbfbfb"></div>
<div class="a" style="left:310.8px;top:196.5px;width:4.1px;height:13.54px;background:#ececec"></div>
<svg style="left:295.2px;top:200.02px" width="4" height="6" viewBox="0 0 4 6"><path d="M0 0L4 3L0 6Z" fill="#e9e9e9"/></svg>
<div class="cell" style="left:318.4px;top:196.45px;width:153.70000000000005px;"><span class="s">BatchJobFaelleWiederEroeffnen</span></div>
<div class="cell" style="left:478px;top:196.45px;width:82.5px"><span class="s">IBatchJob</span></div>
<div class="cell" style="left:796.7px;top:196.45px;width:74.59999999999991px"><span class="s">Batchjob zum wieder eröffnen</span></div>
<div class="a" style="left:314.8px;top:209.94px;width:558.5px;height:13.54px;background:#f5f5dc"></div>
<div class="a" style="left:290.7px;top:209.94px;width:20.3px;height:13.44px;background:#fbfbfb"></div>
<div class="a" style="left:310.8px;top:209.94px;width:4.1px;height:13.54px;background:#ececec"></div>
<svg style="left:295.2px;top:213.46px" width="4" height="6" viewBox="0 0 4 6"><path d="M0 0L4 3L0 6Z" fill="#e9e9e9"/></svg>
<div class="cell" style="left:318.4px;top:209.89px;width:153.70000000000005px;"><span class="s">BatchJobGdZhSammelrechnung</span></div>
<div class="cell" style="left:478px;top:209.89px;width:82.5px"><span class="s">IBatchJob</span></div>
<div class="cell" style="left:796.7px;top:209.89px;width:74.59999999999991px"><span class="s">Batchjob zum Erstellen</span></div>
<div class="a" style="left:314.8px;top:223.38px;width:558.5px;height:13.54px;background:#f5f5dc"></div>
<div class="a" style="left:290.7px;top:223.38px;width:20.3px;height:13.44px;background:#fbfbfb"></div>
<div class="a" style="left:310.8px;top:223.38px;width:4.1px;height:13.54px;background:#ececec"></div>
<svg style="left:295.2px;top:226.9px" width="4" height="6" viewBox="0 0 4 6"><path d="M0 0L4 3L0 6Z" fill="#e9e9e9"/></svg>
<div class="cell" style="left:318.4px;top:223.33px;width:153.70000000000005px;"><span class="s">BatchJobHochteureMedikamenteExport</span></div>
<div class="cell" style="left:478px;top:223.33px;width:82.5px"><span class="s">IBatchJob</span></div>
<div class="cell" style="left:796.7px;top:223.33px;width:74.59999999999991px"><span class="s">Batchjob für die Aufbereitung</span></div>
<div class="a" style="left:314.8px;top:236.82px;width:558.5px;height:13.54px;background:#f5f5dc"></div>
<div class="a" style="left:290.7px;top:236.82px;width:20.3px;height:13.44px;background:#fbfbfb"></div>
<div class="a" style="left:310.8px;top:236.82px;width:4.1px;height:13.54px;background:#ececec"></div>
<svg style="left:295.2px;top:240.34px" width="4" height="6" viewBox="0 0 4 6"><path d="M0 0L4 3L0 6Z" fill="#e9e9e9"/></svg>
<div class="cell" style="left:318.4px;top:236.77px;width:153.70000000000005px;"><span class="s">BatchJobKoguGenerierung</span></div>
<div class="cell" style="left:478px;top:236.77px;width:82.5px"><span class="s">IBatchJob</span></div>
<div class="cell" style="left:796.7px;top:236.77px;width:74.59999999999991px"><span class="s">Batchjob zum automatischen</span></div>
<div class="a" style="left:314.8px;top:250.26px;width:558.5px;height:13.54px;background:#f5f5dc"></div>
<div class="a" style="left:290.7px;top:250.26px;width:20.3px;height:13.44px;background:#fbfbfb"></div>
<div class="a" style="left:310.8px;top:250.26px;width:4.1px;height:13.54px;background:#ececec"></div>
<svg style="left:295.2px;top:253.78px" width="4" height="6" viewBox="0 0 4 6"><path d="M0 0L4 3L0 6Z" fill="#e9e9e9"/></svg>
<div class="cell" style="left:318.4px;top:250.21px;width:153.70000000000005px;"><span class="s">BatchJobLeikatXMLExport</span></div>
<div class="cell" style="left:478px;top:250.21px;width:82.5px"><span class="s">IBatchJob</span></div>
<div class="cell" style="left:796.7px;top:250.21px;width:74.59999999999991px"><span class="s">Batchjob für die Aufbereitung</span></div>
<div class="a" style="left:314.8px;top:263.7px;width:558.5px;height:13.54px;background:#f5f5dc"></div>
<div class="a" style="left:290.7px;top:263.7px;width:20.3px;height:13.44px;background:#fbfbfb"></div>
<div class="a" style="left:310.8px;top:263.7px;width:4.1px;height:13.54px;background:#ececec"></div>
<svg style="left:295.2px;top:267.22px" width="4" height="6" viewBox="0 0 4 6"><path d="M0 0L4 3L0 6Z" fill="#e9e9e9"/></svg>
<div class="cell" style="left:318.4px;top:263.65px;width:153.70000000000005px;"><span class="s">BatchJobLKF</span></div>
<div class="cell" style="left:478px;top:263.65px;width:82.5px"><span class="s">IBatchJob</span></div>
<div class="cell" style="left:796.7px;top:263.65px;width:74.59999999999991px"><span class="s">Batchjob für die Aufbereitung</span></div>
<div class="a" style="left:314.8px;top:277.14px;width:558.5px;height:13.54px;background:#f5f5dc"></div>
<div class="a" style="left:290.7px;top:277.14px;width:20.3px;height:13.44px;background:#fbfbfb"></div>
<div class="a" style="left:310.8px;top:277.14px;width:4.1px;height:13.54px;background:#ececec"></div>
<svg style="left:295.2px;top:280.66px" width="4" height="6" viewBox="0 0 4 6"><path d="M0 0L4 3L0 6Z" fill="#e9e9e9"/></svg>
<div class="cell" style="left:318.4px;top:277.09px;width:153.70000000000005px;"><span class="s">BatchJobNFZ</span></div>
<div class="cell" style="left:478px;top:277.09px;width:82.5px"><span class="s">IBatchJob</span></div>
<div class="cell" style="left:796.7px;top:277.09px;width:74.59999999999991px"><span class="s">Batchjob for generating</span></div>
<div class="a" style="left:314.8px;top:290.58px;width:558.5px;height:13.54px;background:#f5f5dc"></div>
<div class="a" style="left:290.7px;top:290.58px;width:20.3px;height:13.44px;background:#fbfbfb"></div>
<div class="a" style="left:310.8px;top:290.58px;width:4.1px;height:13.54px;background:#ececec"></div>
<svg style="left:295.2px;top:294.1px" width="4" height="6" viewBox="0 0 4 6"><path d="M0 0L4 3L0 6Z" fill="#e9e9e9"/></svg>
<div class="cell" style="left:318.4px;top:290.53px;width:153.70000000000005px;"><span class="s">BatchJobOffeneFaelleSchliessen</span></div>
<div class="cell" style="left:478px;top:290.53px;width:82.5px"><span class="s">IBatchJob</span></div>
<div class="cell" style="left:796.7px;top:290.53px;width:74.59999999999991px"><span class="s">Batchjob zum Schliessen</span></div>
<div class="a" style="left:314.8px;top:304.02px;width:558.5px;height:13.54px;background:#f5f5dc"></div>
<div class="a" style="left:290.7px;top:304.02px;width:20.3px;height:13.44px;background:#fbfbfb"></div>
<div class="a" style="left:310.8px;top:304.02px;width:4.1px;height:13.54px;background:#ececec"></div>
<svg style="left:295.2px;top:307.54px" width="4" height="6" viewBox="0 0 4 6"><path d="M0 0L4 3L0 6Z" fill="#e9e9e9"/></svg>
<div class="cell" style="left:318.4px;top:303.97px;width:153.70000000000005px;"><span class="s">BatchJobRechnungsDruck</span></div>
<div class="cell" style="left:478px;top:303.97px;width:82.5px"><span class="s">IBatchJob</span></div>
<div class="cell" style="left:796.7px;top:303.97px;width:74.59999999999991px"><span class="s">Batchjob zum Ausdrucken</span></div>
<div class="a" style="left:314.8px;top:317.46px;width:558.5px;height:13.54px;background:#f5f5dc"></div>
<div class="a" style="left:290.7px;top:317.46px;width:20.3px;height:13.44px;background:#fbfbfb"></div>
<div class="a" style="left:310.8px;top:317.46px;width:4.1px;height:13.54px;background:#ececec"></div>
<svg style="left:295.2px;top:320.98px" width="4" height="6" viewBox="0 0 4 6"><path d="M0 0L4 3L0 6Z" fill="#e9e9e9"/></svg>
<div class="cell" style="left:318.4px;top:317.41px;width:153.70000000000005px;"><span class="s">BatchJobRueckweisungsStatusMutieren</span></div>
<div class="cell" style="left:478px;top:317.41px;width:82.5px"><span class="s">IBatchJob</span></div>
<div class="cell" style="left:796.7px;top:317.41px;width:74.59999999999991px"><span class="s">Batchjob für das gleiche</span></div>
<div class="a" style="left:314.8px;top:330.9px;width:558.5px;height:13.54px;background:#f5f5dc"></div>
<div class="a" style="left:290.7px;top:330.9px;width:20.3px;height:13.44px;background:#fbfbfb"></div>
<div class="a" style="left:310.8px;top:330.9px;width:4.1px;height:13.54px;background:#ececec"></div>
<svg style="left:295.2px;top:334.42px" width="4" height="6" viewBox="0 0 4 6"><path d="M0 0L4 3L0 6Z" fill="#e9e9e9"/></svg>
<div class="cell" style="left:318.4px;top:330.85px;width:153.70000000000005px;"><span class="s">BatchJobSammelrechnungen</span></div>
<div class="cell" style="left:478px;top:330.85px;width:82.5px"><span class="s">IBatchJob</span></div>
<div class="cell" style="left:796.7px;top:330.85px;width:74.59999999999991px"><span class="s">Batchjob zum Erstellen</span></div>
<div class="a" style="left:314.8px;top:344.34px;width:558.5px;height:13.54px;background:#f5f5dc"></div>
<div class="a" style="left:290.7px;top:344.34px;width:20.3px;height:13.44px;background:#fbfbfb"></div>
<div class="a" style="left:310.8px;top:344.34px;width:4.1px;height:13.54px;background:#ececec"></div>
<svg style="left:295.2px;top:347.86px" width="4" height="6" viewBox="0 0 4 6"><path d="M0 0L4 3L0 6Z" fill="#e9e9e9"/></svg>
<div class="cell" style="left:318.4px;top:344.29px;width:153.70000000000005px;"><span class="s">BatchJobSynchronisierenBatchJobDefinitionen</span></div>
<div class="cell" style="left:478px;top:344.29px;width:82.5px"><span class="s">IBatchJob</span></div>
<div class="cell" style="left:796.7px;top:344.29px;width:74.59999999999991px"><span class="s">Batchjob zum Synchronisieren</span></div>
<div class="a" style="left:314.8px;top:357.78px;width:558.5px;height:13.54px;background:#f5f5dc"></div>
<div class="a" style="left:290.7px;top:357.78px;width:20.3px;height:13.44px;background:#fbfbfb"></div>
<div class="a" style="left:310.8px;top:357.78px;width:4.1px;height:13.54px;background:#ececec"></div>
<svg style="left:295.2px;top:361.3px" width="4" height="6" viewBox="0 0 4 6"><path d="M0 0L4 3L0 6Z" fill="#e9e9e9"/></svg>
<div class="cell" style="left:318.4px;top:357.73px;width:153.70000000000005px;"><span class="s">BatchJobTaschengeldGenerieren</span></div>
<div class="cell" style="left:478px;top:357.73px;width:82.5px"><span class="s">IBatchJob</span></div>
<div class="cell" style="left:796.7px;top:357.73px;width:74.59999999999991px"><span class="s">Batchjob zum Generieren</span></div>
<div class="a" style="left:314.8px;top:371.22px;width:558.5px;height:13.54px;background:#f5f5dc"></div>
<div class="a" style="left:290.7px;top:371.22px;width:20.3px;height:13.44px;background:#fbfbfb"></div>
<div class="a" style="left:310.8px;top:371.22px;width:4.1px;height:13.54px;background:#ececec"></div>
<svg style="left:295.2px;top:374.74px" width="4" height="6" viewBox="0 0 4 6"><path d="M0 0L4 3L0 6Z" fill="#e9e9e9"/></svg>
<div class="cell" style="left:318.4px;top:371.17px;width:153.70000000000005px;"><span class="s">dbo.SuchePotentielleDoppelgaenger</span></div>
<div class="cell" style="left:478px;top:371.17px;width:82.5px"><span class="s">StoredProcedure</span></div>
<svg style="left:0;top:0" width="900" height="468"><defs><linearGradient id="cg" x1="0" y1="0" x2="1" y2="1"><stop offset="0" stop-color="#d4d6d8"/><stop offset="1" stop-color="#f6f6f6"/></linearGradient></defs><rect x="315.0" y="142.14" width="558.3" height="1.15" fill="#d3e6ec"/><rect x="599.2" y="132.17" width="8.5" height="8.5" fill="#8d9294"/><rect x="600.0" y="132.97" width="6.9" height="6.9" fill="#f7f7f7"/><rect x="601.15" y="134.12" width="4.7" height="4.7" fill="url(#cg)"/><rect x="714.4" y="132.17" width="8.5" height="8.5" fill="#8d9294"/><rect x="715.2" y="132.97" width="6.9" height="6.9" fill="#f7f7f7"/><rect x="716.35" y="134.12" width="4.7" height="4.7" fill="url(#cg)"/><rect x="315.0" y="155.58" width="558.3" height="1.15" fill="#e8e8e3"/><rect x="599.2" y="145.61" width="8.5" height="8.5" fill="#8d9294"/><rect x="600.0" y="146.41" width="6.9" height="6.9" fill="#f7f7f7"/><rect x="601.15" y="147.56" width="4.7" height="4.7" fill="url(#cg)"/><rect x="714.4" y="145.61" width="8.5" height="8.5" fill="#8d9294"/><rect x="715.2" y="146.41" width="6.9" height="6.9" fill="#f7f7f7"/><rect x="716.35" y="147.56" width="4.7" height="4.7" fill="url(#cg)"/><rect x="315.0" y="169.02" width="558.3" height="1.15" fill="#e8e8e3"/><rect x="599.2" y="159.05" width="8.5" height="8.5" fill="#8d9294"/><rect x="600.0" y="159.85" width="6.9" height="6.9" fill="#f7f7f7"/><rect x="601.15" y="161.0" width="4.7" height="4.7" fill="url(#cg)"/><rect x="714.4" y="159.05" width="8.5" height="8.5" fill="#8d9294"/><rect x="715.2" y="159.85" width="6.9" height="6.9" fill="#f7f7f7"/><rect x="716.35" y="161.0" width="4.7" height="4.7" fill="url(#cg)"/><rect x="315.0" y="182.46" width="558.3" height="1.15" fill="#e8e8e3"/><rect x="599.2" y="172.49" width="8.5" height="8.5" fill="#8d9294"/><rect x="600.0" y="173.29" width="6.9" height="6.9" fill="#f7f7f7"/><rect x="601.15" y="174.44" width="4.7" height="4.7" fill="url(#cg)"/><rect x="714.4" y="172.49" width="8.5" height="8.5" fill="#8d9294"/><rect x="715.2" y="173.29" width="6.9" height="6.9" fill="#f7f7f7"/><rect x="716.35" y="174.44" width="4.7" height="4.7" fill="url(#cg)"/><rect x="315.0" y="195.9" width="558.3" height="1.15" fill="#e8e8e3"/><rect x="599.2" y="185.93" width="8.5" height="8.5" fill="#8d9294"/><rect x="600.0" y="186.73" width="6.9" height="6.9" fill="#f7f7f7"/><rect x="601.15" y="187.88" width="4.7" height="4.7" fill="url(#cg)"/><rect x="714.4" y="185.93" width="8.5" height="8.5" fill="#8d9294"/><rect x="715.2" y="186.73" width="6.9" height="6.9" fill="#f7f7f7"/><rect x="716.35" y="187.88" width="4.7" height="4.7" fill="url(#cg)"/><rect x="315.0" y="209.34" width="558.3" height="1.15" fill="#e8e8e3"/><rect x="599.2" y="199.37" width="8.5" height="8.5" fill="#8d9294"/><rect x="600.0" y="200.17" width="6.9" height="6.9" fill="#f7f7f7"/><rect x="601.15" y="201.32" width="4.7" height="4.7" fill="url(#cg)"/><rect x="714.4" y="199.37" width="8.5" height="8.5" fill="#8d9294"/><rect x="715.2" y="200.17" width="6.9" height="6.9" fill="#f7f7f7"/><rect x="716.35" y="201.32" width="4.7" height="4.7" fill="url(#cg)"/><rect x="315.0" y="222.78" width="558.3" height="1.15" fill="#e8e8e3"/><rect x="599.2" y="212.81" width="8.5" height="8.5" fill="#8d9294"/><rect x="600.0" y="213.61" width="6.9" height="6.9" fill="#f7f7f7"/><rect x="601.15" y="214.76" width="4.7" height="4.7" fill="url(#cg)"/><rect x="714.4" y="212.81" width="8.5" height="8.5" fill="#8d9294"/><rect x="715.2" y="213.61" width="6.9" height="6.9" fill="#f7f7f7"/><rect x="716.35" y="214.76" width="4.7" height="4.7" fill="url(#cg)"/><rect x="315.0" y="236.22" width="558.3" height="1.15" fill="#e8e8e3"/><rect x="599.2" y="226.25" width="8.5" height="8.5" fill="#8d9294"/><rect x="600.0" y="227.05" width="6.9" height="6.9" fill="#f7f7f7"/><rect x="601.15" y="228.2" width="4.7" height="4.7" fill="url(#cg)"/><rect x="714.4" y="226.25" width="8.5" height="8.5" fill="#8d9294"/><rect x="715.2" y="227.05" width="6.9" height="6.9" fill="#f7f7f7"/><rect x="716.35" y="228.2" width="4.7" height="4.7" fill="url(#cg)"/><rect x="315.0" y="249.66" width="558.3" height="1.15" fill="#e8e8e3"/><rect x="599.2" y="239.69" width="8.5" height="8.5" fill="#8d9294"/><rect x="600.0" y="240.49" width="6.9" height="6.9" fill="#f7f7f7"/><rect x="601.15" y="241.64" width="4.7" height="4.7" fill="url(#cg)"/><rect x="714.4" y="239.69" width="8.5" height="8.5" fill="#8d9294"/><rect x="715.2" y="240.49" width="6.9" height="6.9" fill="#f7f7f7"/><rect x="716.35" y="241.64" width="4.7" height="4.7" fill="url(#cg)"/><rect x="315.0" y="263.1" width="558.3" height="1.15" fill="#e8e8e3"/><rect x="599.2" y="253.13" width="8.5" height="8.5" fill="#8d9294"/><rect x="600.0" y="253.93" width="6.9" height="6.9" fill="#f7f7f7"/><rect x="601.15" y="255.08" width="4.7" height="4.7" fill="url(#cg)"/><rect x="714.4" y="253.13" width="8.5" height="8.5" fill="#8d9294"/><rect x="715.2" y="253.93" width="6.9" height="6.9" fill="#f7f7f7"/><rect x="716.35" y="255.08" width="4.7" height="4.7" fill="url(#cg)"/><rect x="315.0" y="276.54" width="558.3" height="1.15" fill="#e8e8e3"/><rect x="599.2" y="266.57" width="8.5" height="8.5" fill="#8d9294"/><rect x="600.0" y="267.37" width="6.9" height="6.9" fill="#f7f7f7"/><rect x="601.15" y="268.52" width="4.7" height="4.7" fill="url(#cg)"/><rect x="714.4" y="266.57" width="8.5" height="8.5" fill="#8d9294"/><rect x="715.2" y="267.37" width="6.9" height="6.9" fill="#f7f7f7"/><rect x="716.35" y="268.52" width="4.7" height="4.7" fill="url(#cg)"/><rect x="315.0" y="289.98" width="558.3" height="1.15" fill="#e8e8e3"/><rect x="599.2" y="280.01" width="8.5" height="8.5" fill="#8d9294"/><rect x="600.0" y="280.81" width="6.9" height="6.9" fill="#f7f7f7"/><rect x="601.15" y="281.96" width="4.7" height="4.7" fill="url(#cg)"/><rect x="714.4" y="280.01" width="8.5" height="8.5" fill="#8d9294"/><rect x="715.2" y="280.81" width="6.9" height="6.9" fill="#f7f7f7"/><rect x="716.35" y="281.96" width="4.7" height="4.7" fill="url(#cg)"/><rect x="315.0" y="303.42" width="558.3" height="1.15" fill="#e8e8e3"/><rect x="599.2" y="293.45" width="8.5" height="8.5" fill="#8d9294"/><rect x="600.0" y="294.25" width="6.9" height="6.9" fill="#f7f7f7"/><rect x="601.15" y="295.4" width="4.7" height="4.7" fill="url(#cg)"/><rect x="714.4" y="293.45" width="8.5" height="8.5" fill="#8d9294"/><rect x="715.2" y="294.25" width="6.9" height="6.9" fill="#f7f7f7"/><rect x="716.35" y="295.4" width="4.7" height="4.7" fill="url(#cg)"/><rect x="315.0" y="316.86" width="558.3" height="1.15" fill="#e8e8e3"/><rect x="599.2" y="306.89" width="8.5" height="8.5" fill="#8d9294"/><rect x="600.0" y="307.69" width="6.9" height="6.9" fill="#f7f7f7"/><rect x="601.15" y="308.84" width="4.7" height="4.7" fill="url(#cg)"/><rect x="714.4" y="306.89" width="8.5" height="8.5" fill="#8d9294"/><rect x="715.2" y="307.69" width="6.9" height="6.9" fill="#f7f7f7"/><rect x="716.35" y="308.84" width="4.7" height="4.7" fill="url(#cg)"/><rect x="315.0" y="330.3" width="558.3" height="1.15" fill="#e8e8e3"/><rect x="599.2" y="320.33" width="8.5" height="8.5" fill="#8d9294"/><rect x="600.0" y="321.13" width="6.9" height="6.9" fill="#f7f7f7"/><rect x="601.15" y="322.28" width="4.7" height="4.7" fill="url(#cg)"/><rect x="714.4" y="320.33" width="8.5" height="8.5" fill="#8d9294"/><rect x="715.2" y="321.13" width="6.9" height="6.9" fill="#f7f7f7"/><rect x="716.35" y="322.28" width="4.7" height="4.7" fill="url(#cg)"/><rect x="315.0" y="343.74" width="558.3" height="1.15" fill="#e8e8e3"/><rect x="599.2" y="333.77" width="8.5" height="8.5" fill="#8d9294"/><rect x="600.0" y="334.57" width="6.9" height="6.9" fill="#f7f7f7"/><rect x="601.15" y="335.72" width="4.7" height="4.7" fill="url(#cg)"/><rect x="714.4" y="333.77" width="8.5" height="8.5" fill="#8d9294"/><rect x="715.2" y="334.57" width="6.9" height="6.9" fill="#f7f7f7"/><rect x="716.35" y="335.72" width="4.7" height="4.7" fill="url(#cg)"/><rect x="315.0" y="357.18" width="558.3" height="1.15" fill="#e8e8e3"/><rect x="599.2" y="347.21" width="8.5" height="8.5" fill="#8d9294"/><rect x="600.0" y="348.01" width="6.9" height="6.9" fill="#f7f7f7"/><rect x="601.15" y="349.16" width="4.7" height="4.7" fill="url(#cg)"/><rect x="714.4" y="347.21" width="8.5" height="8.5" fill="#8d9294"/><rect x="715.2" y="348.01" width="6.9" height="6.9" fill="#f7f7f7"/><rect x="716.35" y="349.16" width="4.7" height="4.7" fill="url(#cg)"/><rect x="315.0" y="370.62" width="558.3" height="1.15" fill="#e8e8e3"/><rect x="599.2" y="360.65" width="8.5" height="8.5" fill="#8d9294"/><rect x="600.0" y="361.45" width="6.9" height="6.9" fill="#f7f7f7"/><rect x="601.15" y="362.6" width="4.7" height="4.7" fill="url(#cg)"/><rect x="714.4" y="360.65" width="8.5" height="8.5" fill="#8d9294"/><rect x="715.2" y="361.45" width="6.9" height="6.9" fill="#f7f7f7"/><rect x="716.35" y="362.6" width="4.7" height="4.7" fill="url(#cg)"/><rect x="315.0" y="384.06" width="558.3" height="1.15" fill="#e8e8e3"/><rect x="599.2" y="374.09" width="8.5" height="8.5" fill="#8d9294"/><rect x="600.0" y="374.89" width="6.9" height="6.9" fill="#f7f7f7"/><rect x="601.15" y="376.04" width="4.7" height="4.7" fill="url(#cg)"/><rect x="714.4" y="374.09" width="8.5" height="8.5" fill="#8d9294"/><rect x="715.2" y="374.89" width="6.9" height="6.9" fill="#f7f7f7"/><rect x="716.35" y="376.04" width="4.7" height="4.7" fill="url(#cg)"/><rect x="473.85" y="129.3" width="1.2" height="255.36" fill="rgba(234,234,232,.7)"/><rect x="562.05" y="129.3" width="1.2" height="255.36" fill="rgba(234,234,232,.7)"/><rect x="642.85" y="129.3" width="1.2" height="255.36" fill="rgba(234,234,232,.7)"/><rect x="792.85" y="129.3" width="1.2" height="255.36" fill="rgba(234,234,232,.7)"/></svg>
<div class="a" style="left:309.2px;top:197.8px;width:530px;height:0"></div>
<div class="a" style="left:309.1px;top:197.7px;width:230.2px;height:32.6px;border:1.25px solid #c01c22;box-shadow:2.2px 2.2px 2px rgba(60,60,40,.38), inset 2px 2px 1.5px rgba(60,60,40,.18)"></div>
</body></html>
